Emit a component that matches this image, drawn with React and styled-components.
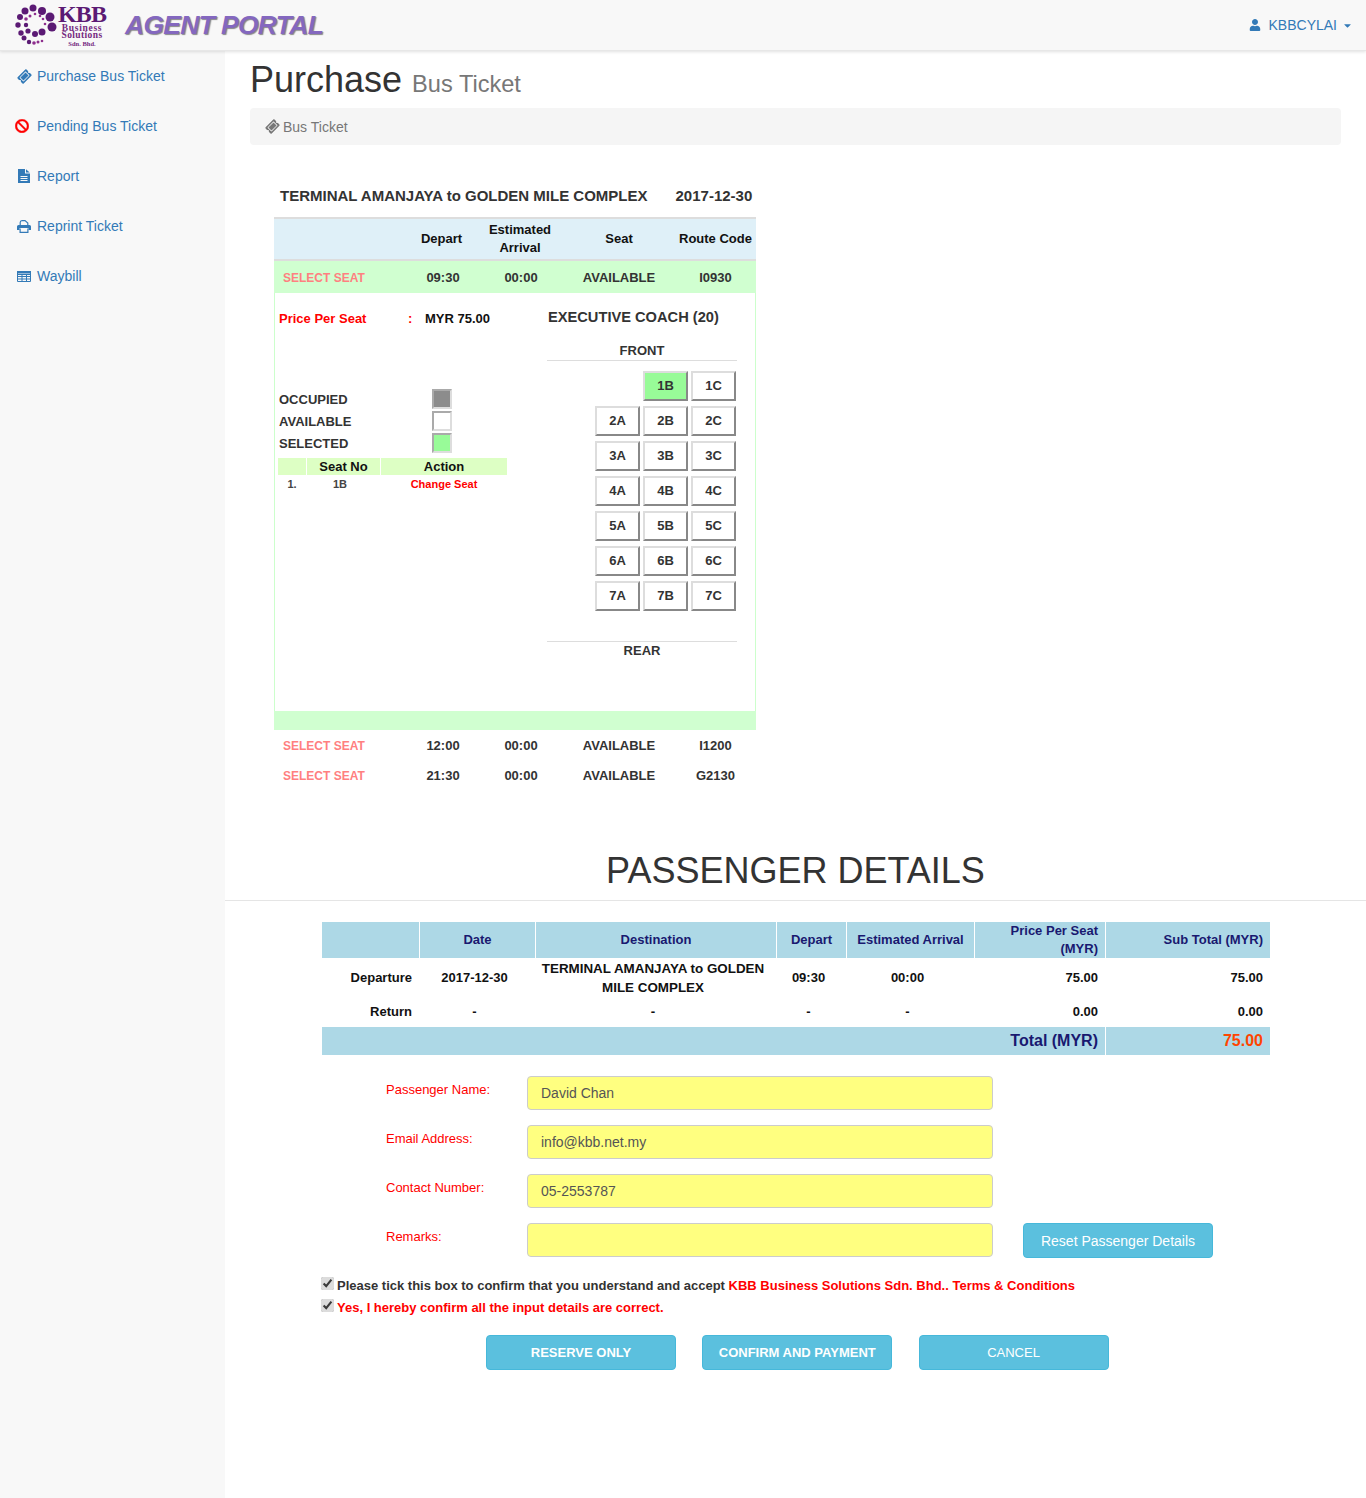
import styled, { createGlobalStyle } from "styled-components";
import { FaBan, FaCaretDown, FaTicketAlt, FaUser } from "react-icons/fa";

const GlobalStyle = createGlobalStyle`
  * { box-sizing: border-box; }
  body {
    margin: 0;
    background: #fff;
    color: #333;
    font-family: "Liberation Sans", Arial, sans-serif;
    font-size: 14px;
    line-height: 20px;
  }
`;

const Navbar = styled.header`
  height: 51px;
  display: flex;
  align-items: center;
  justify-content: space-between;
  background: #f8f8f8;
  border-bottom: 1px solid #e7e7e7;
  box-shadow: 0 1px 3px rgba(0, 0, 0, 0.12);
  position: relative;
  padding: 0 15px;
`;

const Brand = styled.div`
  display: flex;
  align-items: center;
`;

const LogoWords = styled.div`
  display: flex;
  flex-direction: column;
  align-items: center;
  width: 50px;
  margin-left: -2px;
  margin-top: 2px;
  color: #5b1a74;
  font-family: "Liberation Serif", serif;
  font-weight: bold;
  span:nth-child(1) { font-size: 24px; line-height: 19px; letter-spacing: -0.9px; }
  span:nth-child(2) { font-size: 9.5px; line-height: 8px; letter-spacing: 0.7px; color: #75287f; }
  span:nth-child(3) { font-size: 9.5px; line-height: 7px; letter-spacing: 0.4px; color: #75287f; }
  span:nth-child(4) { font-size: 6.5px; line-height: 9px; color: #75287f; }
`;

const PortalTitle = styled.div`
  margin-left: 18px;
  font-size: 26.5px;
  font-weight: bold;
  font-style: italic;
  letter-spacing: -0.7px;
  color: #8468bf;
  text-shadow: 1px 1px 1px #888;
`;

const UserMenu = styled.a`
  display: flex;
  align-items: center;
  gap: 7px;
  color: #337ab7;
  svg:first-child { font-size: 12px; margin-right: 1px; }
  svg:last-child { font-size: 11px; margin: 0 -2px 0 -2px; }
`;

const Shell = styled.div`
  display: flex;
  min-height: 1447px;
`;

const Sidebar = styled.nav`
  width: 225px;
  flex-shrink: 0;
  background: #f8f8f8;
`;

const SideLink = styled.a`
  height: 50px;
  display: flex;
  align-items: center;
  padding-left: 16px;
  color: #337ab7;
`;

const SideIcon = styled.span`
  width: 21px;
  display: flex;
  align-items: center;
  justify-content: center;
  padding-right: 5px;
  color: ${(p) => p.$color || "#337ab7"};
  svg { display: block; }
`;

const BanIcon = styled(FaBan)`
  font-size: 14px;
  position: relative;
  left: -2px;
  stroke: #ff0000;
  stroke-width: 16px;
`;

const TiltedTicket = styled(FaTicketAlt)`
  font-size: 13px;
  transform: rotate(-45deg);
`;

const Main = styled.main`
  flex: 1;
  min-width: 0;
`;

const PageHead = styled.div`
  padding: 0 25px;
`;

const PageTitle = styled.h1`
  margin: 9px 0 4px;
  font-size: 36px;
  font-weight: 500;
  line-height: 39px;
  small {
    font-size: 23.6px;
    color: #777;
    font-weight: 400;
  }
`;

const Crumb = styled.div`
  height: 37px;
  display: flex;
  align-items: center;
  gap: 4px;
  padding: 0 16px;
  background: #f5f5f5;
  border-radius: 4px;
  color: #777;
`;

const Trip = styled.section`
  width: 482px;
  margin: 41px 0 0 49px;
  font-size: 13px;
  font-weight: bold;
`;

const TripTitle = styled.div`
  display: flex;
  gap: 28px;
  padding: 0 0 11px 6px;
  font-size: 15px;
  line-height: 20px;
`;

const TripGrid = styled.div`
  display: grid;
  grid-template-columns: 141px 56px 98px 100px 87px;
  align-items: center;
  text-align: center;
  span:nth-child(5) { padding-left: 6px; }
`;

const TripHead = styled(TripGrid)`
  height: 44px;
  background: #dff0f8;
  border-top: 2px solid #ddd;
  border-bottom: 2px solid #ddd;
  color: #111;
  line-height: 18px;
  span:nth-child(2) { padding-right: 3px; }
`;

const TripRow = styled(TripGrid)`
  height: ${(p) => (p.$open ? "32px" : "30px")};
  padding-top: 2px;
  background: ${(p) => (p.$open ? "#d0ffd0" : "transparent")};
  color: #333;
  span:nth-child(3) { padding-left: 2px; }
`;

const SelectSeat = styled.span`
  text-align: left;
  padding-left: 9px;
  font-size: 12px;
  color: #ff8080;
`;

const Panel = styled.div`
  height: 418px;
  display: grid;
  grid-template-columns: 272px 1fr;
  border-left: 1px solid #ccffcc;
  border-right: 1px solid #ccffcc;
`;

const PanelFoot = styled.div`
  height: 19px;
  background: #d0ffd0;
`;

const LeftCol = styled.div`
  padding: 15px 0 0 4px;
`;

const PriceLine = styled.div`
  display: grid;
  grid-template-columns: 129px 17px 1fr;
  margin-top: 1px;
  color: #ff0000;
  b { color: #111; }
`;

const Legend = styled.div`
  margin-top: 59px;
  display: flex;
  flex-direction: column;
`;

const LegendRow = styled.div`
  height: 22px;
  display: grid;
  grid-template-columns: 153px 20px;
  align-items: start;
  line-height: 24px;
  color: #333;
`;

const LegendBox = styled.span`
  width: 20px;
  height: 20px;
  margin-top: 1px;
  background: ${(p) => p.$bg};
  border: 2px solid;
  border-color: #aaa #ddd #ddd #aaa;
`;

const PickedTable = styled.div`
  margin: 4px 0 0 -1px;
`;

const PickedGrid = styled.div`
  display: grid;
  grid-template-columns: 28px 73px 126px;
  gap: 1px;
  text-align: center;
`;

const PickedHead = styled(PickedGrid)`
  color: #111;
  line-height: 17px;
  span { background: #ddffc4; }
`;

const PickedRow = styled(PickedGrid)`
  margin-top: 2px;
  font-size: 11px;
  line-height: 15px;
  color: #444;
  span:last-child { color: #ff0000; }
  span:nth-child(2) { padding-right: 7px; }
`;

const RightCol = styled.div`
  width: 190px;
  padding-top: 14px;
  text-align: center;
`;

const CoachName = styled.div`
  text-align: left;
  padding-left: 1px;
  font-size: 14.65px;
  color: #333;
`;

const Front = styled.div`
  margin-top: 13px;
  height: 21px;
  line-height: 22px;
  border-bottom: 1px solid #ddd;
  color: #333;
`;

const Seats = styled.div`
  margin: 10px 0 0 48px;
  display: grid;
  grid-template-columns: repeat(3, 45px);
  grid-auto-rows: 30px;
  column-gap: 3px;
  row-gap: 5px;
  justify-content: start;
`;

const Seat = styled.button`
  padding: 0 0 2px;
  grid-column: ${(p) => p.$col || "auto"};
  background: ${(p) => (p.$selected ? "#98fb98" : "#fff")};
  border: 2px solid;
  border-color: #ddd #888 #888 #ddd;
  color: #333;
  font-family: inherit;
  font-size: 13px;
  font-weight: bold;
`;

const Rear = styled.div`
  margin-top: 30px;
  border-top: 1px solid #ddd;
  height: 21px;
  line-height: 18px;
  color: #333;
`;

const DetailsHeading = styled.h2`
  margin: 60px 0 0;
  height: 51px;
  text-align: center;
  font-size: 36px;
  font-weight: 500;
  line-height: 40px;
  padding-top: 1px;
  border-bottom: 1px solid #e5e5e5;
`;

const SummaryWrap = styled.div`
  margin: 21px 0 0 97px;
  width: 948px;
  font-size: 13px;
  font-weight: bold;
`;

const SummaryGrid = styled.div`
  display: grid;
  grid-template-columns: 97px 115px 240px 69px 127px 130px 164px;
  column-gap: 1px;
  align-items: center;
`;

const SummaryHead = styled(SummaryGrid)`
  height: 36px;
  align-items: stretch;
  color: #191970;
  line-height: 18px;
  span {
    background: #add8e6;
    display: flex;
    align-items: center;
    justify-content: center;
    text-align: center;
  }
  span:nth-child(6), span:nth-child(7) {
    justify-content: flex-end;
    text-align: right;
    padding-right: 7px;
  }
`;

const SummaryRow = styled(SummaryGrid)`
  height: ${(p) => p.$h}px;
  padding-bottom: ${(p) => p.$lift || 0}px;
  color: #111;
  line-height: 19px;
  text-align: center;
  span { padding-right: 6px; }
  span:first-child { text-align: right; padding-right: 7px; }
  span:nth-child(3) { font-size: 13.4px; }
  span:nth-child(6), span:nth-child(7) { text-align: right; padding-right: 7px; }
`;

const TotalRow = styled.div`
  height: 28px;
  display: grid;
  grid-template-columns: 783px 164px;
  column-gap: 1px;
  font-size: 16px;
  span {
    background: #add8e6;
    text-align: right;
    padding: 4px 7px 0 0;
    color: #191970;
  }
  span:last-child { color: #ff4500; }
`;

const PassengerForm = styled.form`
  margin: 21px 0 0 161px;
`;

const FormRow = styled.div`
  display: grid;
  grid-template-columns: 141px 466px auto;
  height: 34px;
  margin-bottom: 15px;
`;

const FormLabel = styled.label`
  color: #ff0000;
  line-height: 28px;
  font-size: 13px;
`;

const YellowInput = styled.input`
  height: 34px;
  padding: 6px 13px;
  background: #ffff80;
  border: 1px solid #ccc;
  border-radius: 4px;
  color: #555;
  font-family: inherit;
  font-size: 14px;
`;

const InfoButton = styled.button`
  height: 35px;
  width: 190px;
  background: #5bc0de;
  border: 1px solid #46b8da;
  border-radius: 4px;
  color: #fff;
  font-family: inherit;
  font-size: 13px;
  font-weight: ${(p) => (p.$bold ? "bold" : "normal")};
`;

const ResetButton = styled(InfoButton)`
  margin-left: 30px;
  font-size: 14px;
`;

const Agreement = styled.div`
  margin: 18px 0 0 96px;
  line-height: 22px;
  font-size: 13px;
  font-weight: bold;
`;

const AgreeLine = styled.label`
  display: flex;
  align-items: center;
  gap: 3px;
  color: ${(p) => (p.$red ? "#ff0000" : "#333")};
  input {
    width: 13px;
    height: 13px;
    margin: 0;
    position: relative;
    top: -3px;
    accent-color: #dcdcdc;
  }
  em { color: #ff0000; font-style: normal; }
`;

const ActionRow = styled.div`
  display: flex;
  gap: 26.25px;
  margin: 16px 0 0 261px;
`;

const logoDots = [
  [50, 17, 4.5], [52, 27, 4.5], [42, 11, 4], [33, 8, 3.5], [25, 11, 3.5], [20, 17, 3], [18, 25, 2.7],
  [21, 33, 2.7], [24, 38, 2.5], [29, 42, 2.2], [34, 43, 1.8], [38, 42, 1.5], [42, 41, 1.3],
  [42, 32, 3.5], [35, 34, 3], [28, 31, 2.6], [26, 25, 2.2], [26, 19, 1.8], [30, 16, 1.5],
  [35, 14, 1.3], [40, 16, 1.3], [43, 19, 1.3], [45, 24, 1.3],
];

const seatRows = [2, 3, 4, 5, 6, 7];

function FileIcon() {
  return (
    <svg width="12" height="14" viewBox="0 0 12 14">
      <path
        fill="currentColor"
        fillRule="evenodd"
        d="M0 0h7v4.500h5V14H0zM2.500 7v1h7V7zM2.500 9v1h7V9zM2.500 11v1h7v-1zM8 0.300L11.700 3.500H8z"
      />
    </svg>
  );
}

function PrintIcon() {
  return (
    <svg width="14" height="13" viewBox="0 0 14 13">
      <path fill="none" stroke="currentColor" strokeWidth="1.2" d="M3.200 6V2.500Q3.200.600 5 .600h3l2.800 2.400V6" />
      <path fill="currentColor" d="M1.500 5h11Q14 5 14 6.500V10h-2.500V8h-9V10H0V6.500Q0 5 1.500 5z" />
      <path fill="none" stroke="currentColor" strokeWidth="1.2" d="M3.100 8.500v3.900h7.800V8.500" />
    </svg>
  );
}

function GridIcon() {
  return (
    <svg width="14" height="11" viewBox="0 0 14 11">
      <path
        fill="none"
        stroke="currentColor"
        d="M.5.500h13v10H.500zM.5 3.500h13M.5 5.500h13M.5 8h13M5 3v7.500M9.500 3v7.500"
      />
      <path fill="currentColor" d="M0 0h14v2.500H0z" />
    </svg>
  );
}

function App() {
  return (
    <>
      <GlobalStyle />
      <Navbar>
        <Brand>
          <svg width="44" height="46" viewBox="15 2 44 46">
            {logoDots.map(([x, y, r]) => (
              <circle key={`${x}-${y}`} cx={x} cy={y} r={r} fill={r > 1.9 ? "#5b1a74" : "#8e2f8e"} />
            ))}
          </svg>
          <LogoWords>
            <span>KBB</span>
            <span>Business</span>
            <span>Solutions</span>
            <span>Sdn. Bhd.</span>
          </LogoWords>
          <PortalTitle>AGENT PORTAL</PortalTitle>
        </Brand>
        <UserMenu>
          <FaUser />
          KBBCYLAI
          <FaCaretDown />
        </UserMenu>
      </Navbar>
      <Shell>
        <Sidebar>
          <SideLink><SideIcon><TiltedTicket /></SideIcon>Purchase Bus Ticket</SideLink>
          <SideLink><SideIcon $color="#ff0000"><BanIcon /></SideIcon>Pending Bus Ticket</SideLink>
          <SideLink><SideIcon><FileIcon /></SideIcon>Report</SideLink>
          <SideLink><SideIcon><PrintIcon /></SideIcon>Reprint Ticket</SideLink>
          <SideLink><SideIcon><GridIcon /></SideIcon>Waybill</SideLink>
        </Sidebar>
        <Main>
          <PageHead>
            <PageTitle>Purchase <small>Bus Ticket</small></PageTitle>
            <Crumb><TiltedTicket />Bus Ticket</Crumb>
          </PageHead>

          <Trip>
            <TripTitle>
              <span>TERMINAL AMANJAYA to GOLDEN MILE COMPLEX</span>
              <span>2017-12-30</span>
            </TripTitle>
            <TripHead>
              <span />
              <span>Depart</span>
              <span>Estimated Arrival</span>
              <span>Seat</span>
              <span>Route Code</span>
            </TripHead>
            <TripRow $open>
              <SelectSeat>SELECT SEAT</SelectSeat>
              <span>09:30</span>
              <span>00:00</span>
              <span>AVAILABLE</span>
              <span>I0930</span>
            </TripRow>
            <Panel>
              <LeftCol>
                <PriceLine>
                  <span>Price Per Seat</span>
                  <span>:</span>
                  <b>MYR 75.00</b>
                </PriceLine>
                <Legend>
                  <LegendRow>OCCUPIED<LegendBox $bg="#8c8c8c" /></LegendRow>
                  <LegendRow>AVAILABLE<LegendBox $bg="#fff" /></LegendRow>
                  <LegendRow>SELECTED<LegendBox $bg="#98fb98" /></LegendRow>
                </Legend>
                <PickedTable>
                  <PickedHead>
                    <span />
                    <span>Seat No</span>
                    <span>Action</span>
                  </PickedHead>
                  <PickedRow>
                    <span>1.</span>
                    <span>1B</span>
                    <span>Change Seat</span>
                  </PickedRow>
                </PickedTable>
              </LeftCol>
              <RightCol>
                <CoachName>EXECUTIVE COACH (20)</CoachName>
                <Front>FRONT</Front>
                <Seats>
                  <Seat $col={2} $selected>1B</Seat>
                  <Seat>1C</Seat>
                  {seatRows.flatMap((row) =>
                    ["A", "B", "C"].map((col) => <Seat key={row + col}>{row + col}</Seat>)
                  )}
                </Seats>
                <Rear>REAR</Rear>
              </RightCol>
            </Panel>
            <PanelFoot />
            <TripRow>
              <SelectSeat>SELECT SEAT</SelectSeat>
              <span>12:00</span>
              <span>00:00</span>
              <span>AVAILABLE</span>
              <span>I1200</span>
            </TripRow>
            <TripRow>
              <SelectSeat>SELECT SEAT</SelectSeat>
              <span>21:30</span>
              <span>00:00</span>
              <span>AVAILABLE</span>
              <span>G2130</span>
            </TripRow>
          </Trip>

          <DetailsHeading>PASSENGER DETAILS</DetailsHeading>

          <SummaryWrap>
            <SummaryHead>
              <span />
              <span>Date</span>
              <span>Destination</span>
              <span>Depart</span>
              <span>Estimated Arrival</span>
              <span>Price Per Seat (MYR)</span>
              <span>Sub Total (MYR)</span>
            </SummaryHead>
            <SummaryRow $h={39}>
              <span>Departure</span>
              <span>2017-12-30</span>
              <span>TERMINAL AMANJAYA to GOLDEN MILE COMPLEX</span>
              <span>09:30</span>
              <span>00:00</span>
              <span>75.00</span>
              <span>75.00</span>
            </SummaryRow>
            <SummaryRow $h={30} $lift={2}>
              <span>Return</span>
              <span>-</span>
              <span>-</span>
              <span>-</span>
              <span>-</span>
              <span>0.00</span>
              <span>0.00</span>
            </SummaryRow>
            <TotalRow>
              <span>Total (MYR)</span>
              <span>75.00</span>
            </TotalRow>
          </SummaryWrap>

          <PassengerForm>
            <FormRow>
              <FormLabel>Passenger Name:</FormLabel>
              <YellowInput defaultValue="David Chan" />
            </FormRow>
            <FormRow>
              <FormLabel>Email Address:</FormLabel>
              <YellowInput defaultValue="info@kbb.net.my" />
            </FormRow>
            <FormRow>
              <FormLabel>Contact Number:</FormLabel>
              <YellowInput defaultValue="05-2553787" />
            </FormRow>
            <FormRow>
              <FormLabel>Remarks:</FormLabel>
              <YellowInput />
              <ResetButton type="button">Reset Passenger Details</ResetButton>
            </FormRow>
          </PassengerForm>

          <Agreement>
            <AgreeLine>
              <input type="checkbox" defaultChecked />
              <span>
                Please tick this box to confirm that you understand and accept{" "}
                <em>KBB Business Solutions Sdn. Bhd.. Terms &amp; Conditions</em>
              </span>
            </AgreeLine>
            <AgreeLine $red>
              <input type="checkbox" defaultChecked />
              Yes, I hereby confirm all the input details are correct.
            </AgreeLine>
          </Agreement>

          <ActionRow>
            <InfoButton type="button" $bold>RESERVE ONLY</InfoButton>
            <InfoButton type="button" $bold>CONFIRM AND PAYMENT</InfoButton>
            <InfoButton type="button">CANCEL</InfoButton>
          </ActionRow>
        </Main>
      </Shell>
    </>
  );
}

export default App;
